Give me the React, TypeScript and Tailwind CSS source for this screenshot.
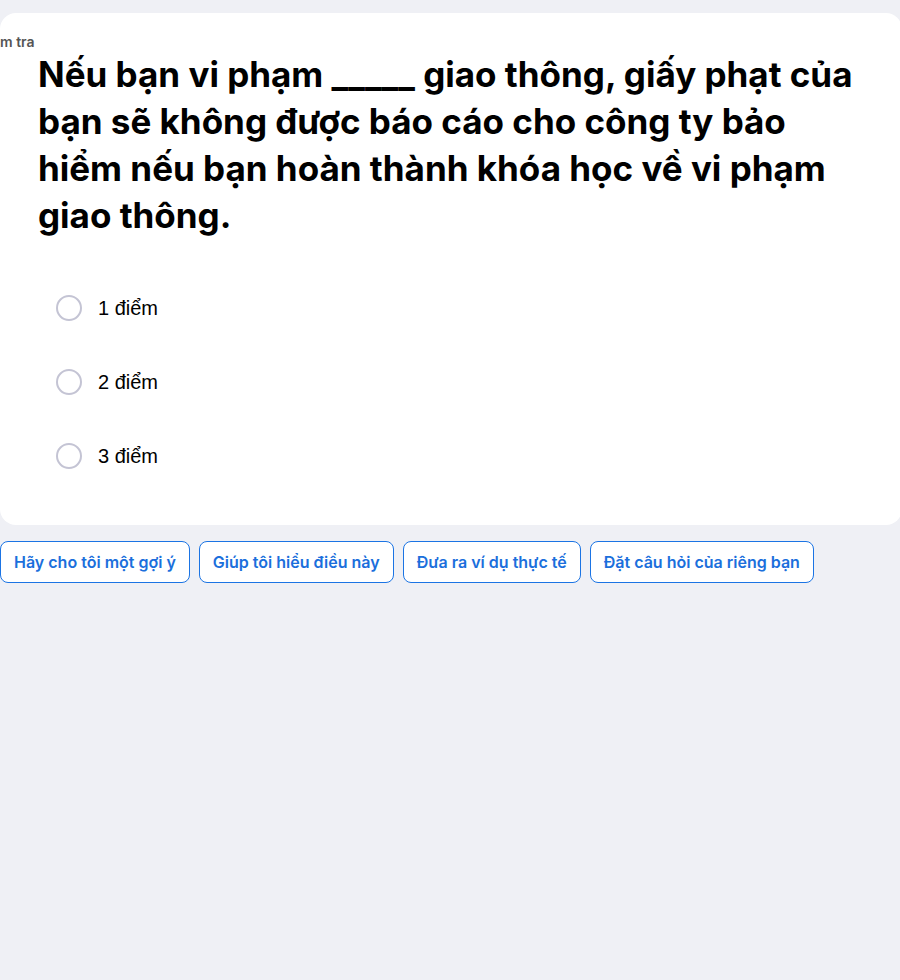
export default function App() {
  const options = ['1 điểm', '2 điểm', '3 điểm'];
  const prompts = ['Hãy cho tôi một gợi ý', 'Giúp tôi hiểu điều này', 'Đưa ra ví dụ thực tế', 'Đặt câu hỏi của riêng bạn'];

  return (
    <div className="min-h-[980px] w-[900px] bg-[#eff0f5] pt-[13px] font-['Inter',sans-serif] overflow-hidden">
      {/* Question card */}
      <div className="w-[902px] h-[512px] bg-white rounded-2xl pt-[21px]">
        <div className="text-[#555] text-[14px] font-semibold leading-[16px]">m tra</div>
        <h1 className="mt-[1px] pl-[38px] pr-[40px] text-black text-[35px] font-bold leading-[47px]">
          Nếu bạn vi phạm _____ giao thông, giấy phạt của bạn sẽ không được báo cáo cho công ty bảo hiểm nếu bạn hoàn thành khóa học về vi phạm giao thông.
        </h1>
        <div className="mt-[56px] pl-[56px] flex flex-col gap-[48px]">
          {options.map((o) => (
            <label key={o} className="flex items-center gap-[16px] h-[26px]">
              <span className="w-[26px] h-[26px] rounded-full border-2 border-[#c4c4d4] bg-white" />
              <span className="text-black text-[20px] font-['Liberation_Sans',sans-serif]">{o}</span>
            </label>
          ))}
        </div>
      </div>

      {/* Prompt buttons */}
      <div className="mt-[16px] flex gap-[9px]">
        {prompts.map((p) => (
          <button key={p} className="h-[42px] px-[13px] border border-[#1b74e4] rounded-lg bg-white text-[#1b6fdc] text-[16px] font-semibold">
            {p}
          </button>
        ))}
      </div>
    </div>
  );
}
